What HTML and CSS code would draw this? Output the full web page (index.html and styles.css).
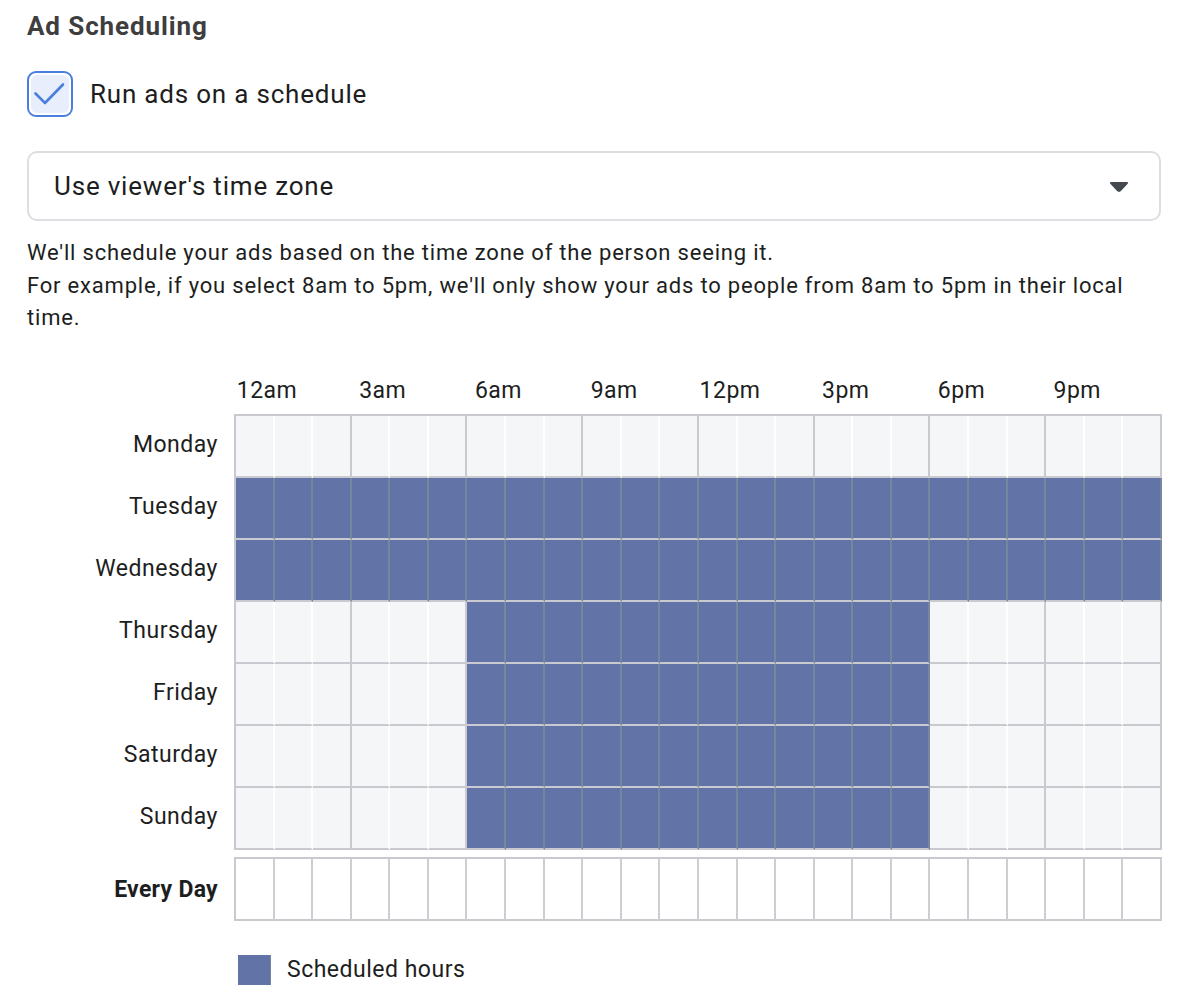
FILE: index.html
```html
<!DOCTYPE html>
<html lang="en">
<head>
    <meta charset="UTF-8">
    <meta name="viewport" content="width=device-width, initial-scale=1.0">
    <title>Ad Scheduling</title>
    <link rel="stylesheet" href="styles.css">
</head>
<body>
    <h2 class="title">Ad Scheduling</h2>

    <label class="check-row">
        <span class="checkbox">
            <svg width="38" height="38" viewBox="0 0 38 38">
                <path d="M4.5 18.5 L14 28 L32 9.5" fill="none" stroke="#4a7fe0" stroke-width="2.6" stroke-linecap="round" stroke-linejoin="round"/>
            </svg>
        </span>
        <span class="check-label">Run ads on a schedule</span>
    </label>

    <div class="select">
        <span>Use viewer's time zone</span>
        <svg class="caret" width="20" height="12" viewBox="0 0 20 12">
            <path d="M2 2 H18 L11.2 9.2 Q10 10.4 8.8 9.2 Z" fill="#444950" stroke="#444950" stroke-width="2" stroke-linejoin="round"/>
        </svg>
    </div>

    <p class="help">We'll schedule your ads based on the time zone of the person seeing it.<br>
    For example, if you select 8am to 5pm, we'll only show your ads to people from 8am to 5pm in their local time.</p>

    <div class="schedule">
        <div class="hours">
            <span>12am</span><span>3am</span><span>6am</span><span>9am</span>
            <span>12pm</span><span>3pm</span><span>6pm</span><span>9pm</span>
        </div>

        <div class="days" id="day-labels"></div>
        <div class="grid" id="week-grid"></div>

        <div class="days every"><div class="day">Every Day</div></div>
        <div class="grid every-grid" id="every-grid"></div>
    </div>

    <div class="legend">
        <span class="swatch"></span>
        <span>Scheduled hours</span>
    </div>

    <script>
        // horas agendadas por dia (inicio, fim exclusivo)
        const schedule = [
            { day: 'Monday', from: 0, to: 0 },
            { day: 'Tuesday', from: 0, to: 24 },
            { day: 'Wednesday', from: 0, to: 24 },
            { day: 'Thursday', from: 6, to: 18 },
            { day: 'Friday', from: 6, to: 18 },
            { day: 'Saturday', from: 6, to: 18 },
            { day: 'Sunday', from: 6, to: 18 }
        ];

        const labels = document.getElementById('day-labels');
        const grid = document.getElementById('week-grid');
        const every = document.getElementById('every-grid');

        schedule.forEach(row => {
            const label = document.createElement('div');
            label.className = 'day';
            label.innerText = row.day;
            labels.appendChild(label);

            for (let h = 0; h < 24; h++) {
                const cell = document.createElement('div');
                cell.className = 'cell';
                if (h >= row.from && h < row.to) {
                    cell.classList.add('on');
                } else if (h % 3 === 2) {
                    cell.classList.add('edge');
                }
                grid.appendChild(cell);
            }
        });

        for (let h = 0; h < 24; h++) {
            const cell = document.createElement('div');
            cell.className = 'cell';
            every.appendChild(cell);
        }
    </script>
</body>
</html>
```

FILE: styles.css
```css
body {
    font-family: Roboto, "Liberation Sans", Arial, sans-serif;
    margin: 0;
    padding: 0 21px 0 27px;
    background-color: #fff;
    color: #1c1e21;
}
.title {
    font-size: 26px;
    letter-spacing: 0.9px;
    font-weight: bold;
    color: #3e3e40;
    margin: 11px 0 0;
    line-height: 30px;
}
.check-row {
    display: flex;
    align-items: center;
    margin-top: 30px;
}
.checkbox {
    width: 46px;
    height: 46px;
    box-sizing: border-box;
    border: 2px solid #4a7fe0;
    border-radius: 9px;
    background-color: #fff;
    display: flex;
    align-items: center;
    justify-content: center;
    padding: 2px;
}
.checkbox svg {
    background-color: #e8eefb;
    border-radius: 6px;
}
.check-label {
    font-size: 26px;
    letter-spacing: 0.8px;
    margin-left: 17px;
}
.select {
    margin-top: 34px;
    height: 70px;
    box-sizing: border-box;
    border: 2px solid #dcdee2;
    border-radius: 10px;
    display: flex;
    align-items: center;
    justify-content: space-between;
    padding: 0 30px 0 25px;
    font-size: 26px;
    letter-spacing: 0.8px;
}
.caret {
    margin-top: 2px;
}
.help {
    font-size: 22px;
    letter-spacing: 0.8px;
    line-height: 32.5px;
    margin: 16px 0 0;
    color: #1c1e21;
}
.schedule {
    display: grid;
    grid-template-columns: 191px 928px;
    column-gap: 16px;
    margin-top: 29px;
}
.hours {
    grid-column: 2;
    display: grid;
    grid-template-columns: repeat(8, 1fr);
    height: 50px;
    font-size: 23px;
    letter-spacing: 0.5px;
    padding-left: 2px;
}
.hours span {
    width: 62px;
    text-align: center;
    line-height: 50px;
    margin-top: 2px;
}
.days {
    grid-column: 1;
    display: flex;
    flex-direction: column;
    padding-top: 2px;
}
.day {
    height: 62px;
    line-height: 58px;
    text-align: right;
    font-size: 23px;
    letter-spacing: 0.5px;
}
.every {
    margin-top: 7px;
}
.every .day {
    font-weight: bold;
    line-height: 62px;
    letter-spacing: 0.3px;
}
.grid {
    grid-column: 2;
    display: grid;
    grid-template-columns: repeat(24, 1fr);
    border-left: 2px solid #c9cacf;
    border-top: 2px solid #c9cacf;
}
.cell {
    height: 60px;
    background-color: #f5f6f7;
    border-right: 2px solid #fff;
    border-bottom: 2px solid #c9cacf;
}
.cell.edge {
    border-right-color: #c9cacf;
}
.cell:nth-child(24n) {
    border-right-color: #c9cacf;
}
.cell.on {
    background-color: #6274a7;
    border-right-color: #76869d;
}
.every-grid {
    margin-top: 7px;
}
.every-grid .cell {
    background-color: #fff;
    border-right-color: #cdcdd2;
}
.legend {
    display: flex;
    align-items: center;
    margin: 34px 0 0 211px;
    font-size: 23px;
    letter-spacing: 0.5px;
}
.swatch {
    width: 32px;
    height: 30px;
    background-color: #6274a7;
    border-right: 1px solid #76869d;
    margin-right: 16px;
}
```
